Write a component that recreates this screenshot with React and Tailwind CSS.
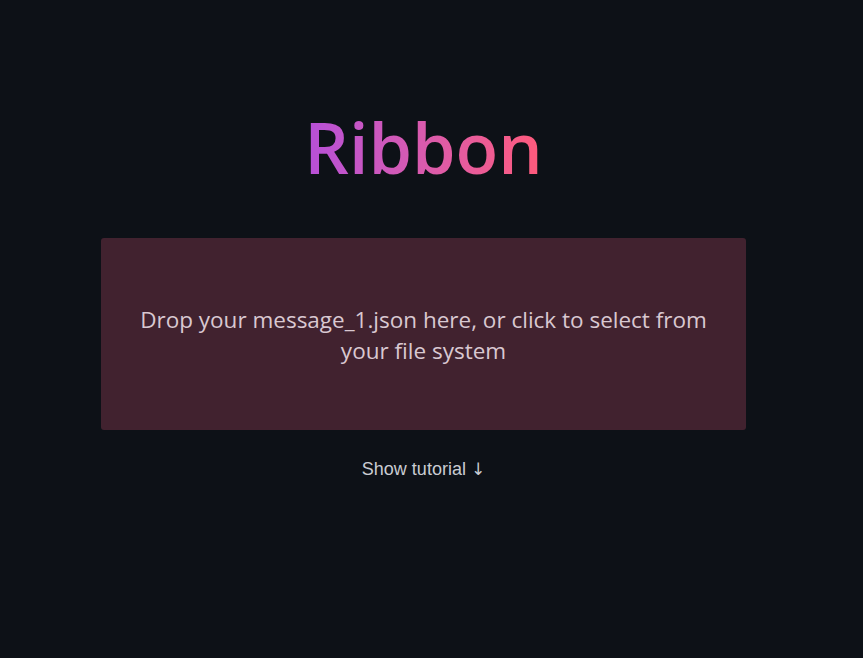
import React from 'react';

export default function App() {
  return (
    <div className="min-h-[658px] w-full bg-[#0d1117] flex flex-col items-center pr-[16px] font-['Open_Sans','Noto_Sans',sans-serif]">
      <h1 className="mt-[103px] text-[70px] leading-[88px] font-semibold bg-gradient-to-r from-[#b64fd9] to-[#ff5a7a] bg-clip-text text-transparent">
        Ribbon
      </h1>
      <div className="mt-[47px] w-[645px] h-[192px] rounded-[3px] bg-[#41222f] flex items-center justify-center px-8 cursor-pointer">
        <p className="text-center text-[22.5px] leading-[31px] text-[#d9c8d1] max-w-[590px] mt-[2px]">
          Drop your message_1.json here, or click to select from your file system
        </p>
      </div>
      <button className="mt-[26px] flex items-center gap-[5px] text-[18px] text-[#c9ccd2] font-['Liberation_Sans',Arial,sans-serif]">
        <span>Show tutorial</span>
        <span className="font-['DejaVu_Sans',sans-serif] text-[17px]">↓</span>
      </button>
    </div>
  );
}
